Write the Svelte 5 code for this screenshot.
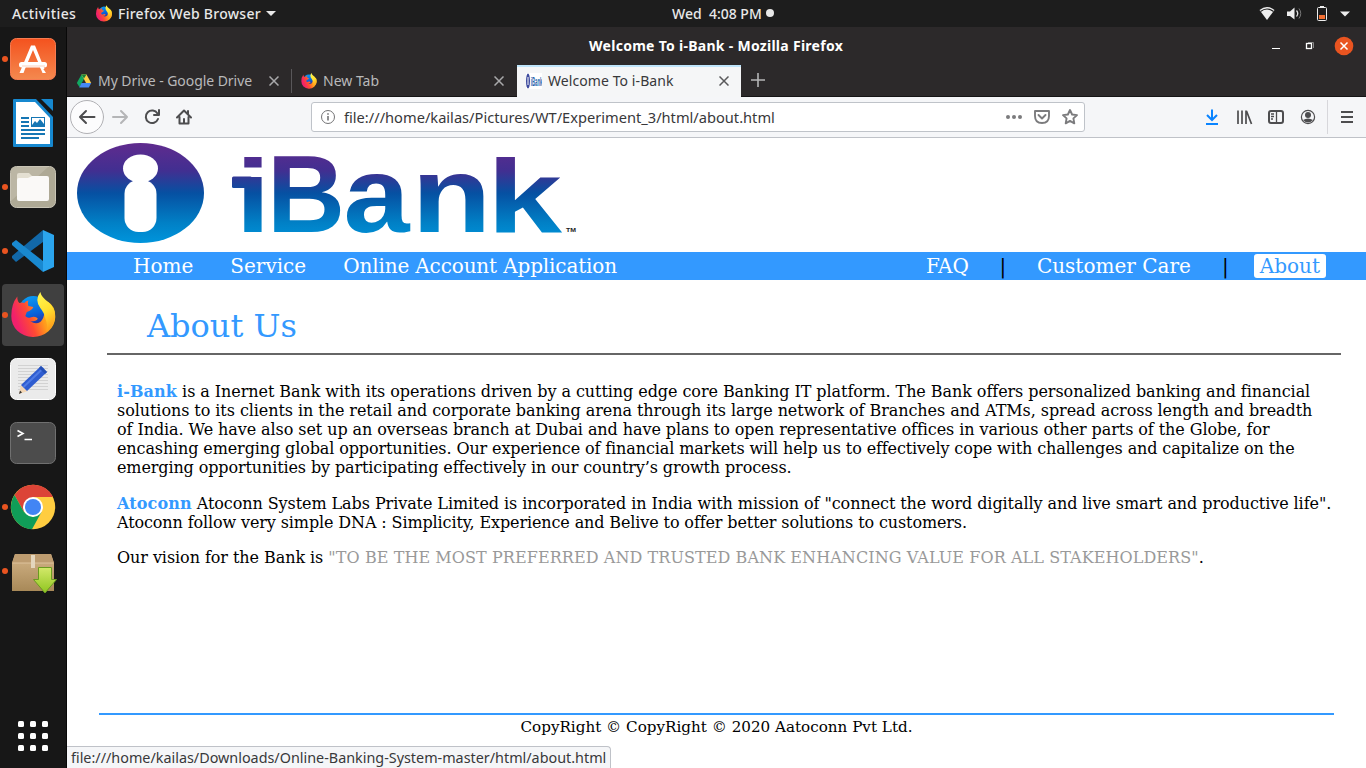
<script>
  const left = ['Home', 'Service', 'Online Account Application'];
  const dots = [0, 1, 2, 3, 4, 5, 6, 7, 8];
</script>

{#snippet firefox()}
  <defs>
    <linearGradient id="ffbody" x1="0.95" y1="0.3" x2="0.1" y2="0.6">
      <stop offset="0" stop-color="#ffc820" /><stop offset="0.35" stop-color="#ff9a1c" /><stop offset="0.65" stop-color="#ff4a34" /><stop offset="1" stop-color="#f0206c" />
    </linearGradient>
    <linearGradient id="fftail" x1="0.3" y1="0" x2="0.6" y2="1">
      <stop offset="0" stop-color="#fff44f" /><stop offset="0.5" stop-color="#ffe02f" /><stop offset="1" stop-color="#ff9a1a" />
    </linearGradient>
    <linearGradient id="ffglobe" x1="0.3" y1="0" x2="0.6" y2="1">
      <stop offset="0" stop-color="#0a9df5" /><stop offset="0.65" stop-color="#0a5fd8" /><stop offset="1" stop-color="#2b2f9b" />
    </linearGradient>
  </defs>
  <circle cx="22" cy="18.500" r="14.500" fill="url(#ffglobe)" />
  <path fill="url(#ffbody)" d="M6 4.500C6 8 6.500 9 8 11Q11 10 13 11Q14 9 17 8.500Q16 11 17 14L22 15Q21 18 15.500 20L14 24Q16 26.500 19 25.500Q24 23.500 26.500 26.500Q25 30 19 29Q24 33 29 30Q33 26 33 20L37 10Q44 14 44 25A22 20.500 0 0 1 0 24Q0 12 6 4.500Z" />
  <path fill="url(#fftail)" d="M29 0Q30 5 37 10Q46 18 43 29Q41 36 35 39Q37 33 33.500 25Q33 21 29 16Q23 8 29 0Z" />
{/snippet}

<div class="desktop">
  <header class="topbar">
    <span class="activities">Activities</span>
    <svg class="ff-small" viewBox="0 0 44 46">{@render firefox()}</svg>
    <span class="appname">Firefox Web Browser</span>
    <svg class="caret" viewBox="0 0 10 5"><path d="M0 0H10L5 5Z" fill="#e8e8e8" /></svg>
    <span class="clock">Wed&nbsp; 4:08 PM</span>
    <i class="dot"></i>
    <svg class="tray" width="98" height="20" viewBox="0 0 98 20" fill="none">
      <path d="M0.500 5Q8 -1 15.500 5L8 15Z" fill="#eee" />
      <path d="M1.500 6.500Q8 1.500 14.500 6.500" stroke="#1d1d1d" stroke-width="1.100" />
      <path d="M28 6.500H31L35.500 2.500V14.500L31 11H28Z" fill="#eee" />
      <path d="M37.500 5.500Q40 8.500 37.500 11.500" stroke="#ddd" stroke-width="1.300" /><path d="M40 3.500Q43.500 8.500 40 13.500" stroke="#777" />
      <rect x="58.500" y="2.500" width="9" height="13" rx="1" stroke="#eee" /><path d="M61 1.500H65" stroke="#eee" /><rect x="60" y="10" width="6" height="4" fill="#f36f32" />
      <path d="M81 6.500H91L86 11.500Z" fill="#eee" />
    </svg>
  </header>

  <div class="main">
    <aside class="dock">
      <div class="app"><i></i>
        <svg viewBox="0 0 66 64">
          <defs><linearGradient id="soft" x2="0" y2="1"><stop stop-color="#f4521e" /><stop offset="1" stop-color="#f4894f" /></linearGradient></defs>
          <rect x="10.500" y="11.500" width="45" height="41" rx="6" fill="url(#soft)" stroke="#f77b50" />
          <path d="M31 18.500H35L44.500 42H41L33 23L25 42L23.500 46H19.500Z" fill="#fff" /><path d="M42 40L46 46H42.500L40 40Z" fill="#fff" />
          <rect x="19" y="35" width="28" height="5.500" rx="2.500" fill="#fff" /><path d="M22 39H45" stroke="#fbd1bd" />
        </svg>
      </div>
      <div class="app">
        <svg viewBox="0 0 66 64">
          <path d="M13 9Q13 8 14 8H36L53 26V55Q53 56 52 56H14Q13 56 13 55Z" fill="#1688cf" /><path d="M16 11H35L50 27V53H16Z" fill="#fff" />
          <path d="M41 8H52Q53 8 53 9V20Z" fill="#1688cf" />
          <path d="M21 27H29M21 31H29M21 35H29M21 39H45M21 43H45M21 47H39" stroke="#1576b4" stroke-width="2" />
          <rect x="31.500" y="26.500" width="13" height="9" fill="none" stroke="#1576b4" /><path d="M32 34L35 30L37 32L40 28L44 33V36H32Z" fill="#1576b4" />
        </svg>
      </div>
      <div class="app"><i></i>
        <svg viewBox="0 0 66 64">
          <rect x="10.500" y="11.500" width="45" height="41" rx="6" fill="#aea995" stroke="#c8c4b5" /><path d="M15 12H48L11 46V16Q11 12 15 12Z" fill="#bbb6a4" />
          <path d="M17 22V20Q17 18 19 18H29L32 21V25H17Z" fill="#e4e0d2" /><path d="M19 23H28L32 21H47Q49 21 49 23V44Q49 46 47 46H19Q17 46 17 44V25Q17 23 19 23Z" fill="#faf9f7" />
        </svg>
      </div>
      <div class="app"><i></i>
        <svg viewBox="0 0 66 64">
          <path d="M12 39L16 43L43 23V11L12 37Z" fill="#1268a8" /><path d="M12 24L16 21L43 42V53L12 26Z" fill="#1989d0" />
          <path d="M43 11L54 16V48L43 53Z" fill="#2ba5ee" />
        </svg>
      </div>
      <div class="app active"><i></i>
        <svg viewBox="0 0 66 64"><g transform="translate(11.300 9)">{@render firefox()}</g></svg>
      </div>
      <div class="app">
        <svg viewBox="0 0 66 64">
          <rect x="10.500" y="11.500" width="45" height="41" rx="6" fill="#ebebeb" stroke="#fff" />
          <path d="M18 18.500H48M18 21.500H48M18 24.500H48M18 27.500H48M18 30.500H48M18 33.500H48M18 36.500H48M18 39.500H48M18 42.500H48" stroke="#d2d2d2" />
          <path d="M19 47L21 38L28 44Z" fill="#f3d6b5" /><path d="M19 47L20 43.500L22 45.500Z" fill="#333" />
          <path d="M21 38L41 19L47 25L27 44Z" fill="#2f5dd0" /><path d="M23.500 40L43.500 21" stroke="#4f7be4" stroke-width="2" /><path d="M41 19L44 22L47 25L45 27L39 21Z" fill="#2450b6" />
        </svg>
      </div>
      <div class="app">
        <svg viewBox="0 0 66 64">
          <rect x="10.500" y="11.500" width="45" height="41" rx="6" fill="#4c4c4c" stroke="#707070" />
          <path d="M17.500 19.500L23 22.500L17.500 25.500M24.500 28.500H32" fill="none" stroke="#fff" stroke-width="1.600" />
        </svg>
      </div>
      <div class="app"><i></i>
        <svg viewBox="0 0 66 64">
          <circle cx="33" cy="32" r="22.200" fill="#ffcd40" />
          <path d="M14.500 20A22.200 22.200 0 0 1 53 22H33L24 37Z" fill="#dc4437" />
          <path d="M14.500 20A22.200 22.200 0 0 0 32 54.200L41.500 37L33 42L24 37Z" fill="#109d58" />
          <circle cx="33" cy="32" r="10" fill="#fff" /><circle cx="33" cy="32" r="8" fill="#4285f4" />
        </svg>
      </div>
      <div class="app"><i></i>
        <svg viewBox="0 0 66 64">
          <defs>
            <linearGradient id="box" x2="0" y2="1"><stop stop-color="#d3b488" /><stop offset="1" stop-color="#a88958" /></linearGradient>
            <linearGradient id="arrow" x2="0" y2="1"><stop stop-color="#d3e96a" /><stop offset="1" stop-color="#8fc51f" /></linearGradient>
          </defs>
          <path d="M15 15H51L54 24V52H12V24Z" fill="url(#box)" /><path d="M15 15H51L54 24H12Z" fill="#bd9c70" /><path d="M12.500 24H53.500" stroke="#dcc29b" />
          <path d="M31 16H35V29H31Z" fill="#e4d6bd" />
          <path d="M38.500 28.500H51.500V40.500H56.500L45 54L33.500 40.500H38.500Z" fill="url(#arrow)" stroke="#6a9b20" />
        </svg>
      </div>
      <div class="grid">{#each dots as d (d)}<b></b>{/each}</div>
    </aside>

    <section class="window">
      <div class="titlebar">
        <span class="title">Welcome To i-Bank - Mozilla Firefox</span>
        <svg width="86" height="20" viewBox="0 0 86 20" fill="none">
          <path d="M3 12.500H11" stroke="#fff" />
          <path d="M39 6.500H44.500V12" stroke="#888" /><rect x="37.500" y="7.500" width="5" height="5" stroke="#fff" stroke-width="1.300" />
          <circle cx="75" cy="10" r="9.300" fill="#e95420" /><path d="M71.500 6.500L78.500 13.500M78.500 6.500L71.500 13.500" stroke="#fff" stroke-width="1.500" />
        </svg>
      </div>

      <div class="tabs">
        <div class="tab">
          <svg class="fav" viewBox="0 0 16 16">
            <path d="M5.500 1.500H10.500L8 6L3.500 14L0.800 10Z" fill="#11a861" /><path d="M5.500 1.500H10.500L15.200 10H10Z" fill="#ffcf48" /><path d="M5.500 1.500H10.500L8 5.500Z" fill="#188038" /><path d="M5.500 10H15.200L12.800 14.500H3.200Z" fill="#4688f4" />
          </svg>
          <span class="t1">My Drive - Google Drive</span>
          <svg class="x" viewBox="0 0 10 10"><path d="M0.500 0.500L9.500 9.500M9.500 0.500L0.500 9.500" /></svg>
        </div>
        <div class="tab second">
          <svg class="fav" viewBox="0 0 44 46">{@render firefox()}</svg>
          <span class="t2">New Tab</span>
          <svg class="x" viewBox="0 0 10 10"><path d="M0.500 0.500L9.500 9.500M9.500 0.500L0.500 9.500" /></svg>
        </div>
        <div class="tab current">
          <svg class="fav" viewBox="0 0 16 16">
            <rect width="16" height="16" fill="#fff" /><ellipse cx="2" cy="8" rx="2" ry="7.500" fill="#3c4a9e" /><path d="M2 4V12" stroke="#fff" />
            <text transform="translate(4.800 13) scale(.33 1)" font-family="Liberation Sans" font-weight="bold" font-size="13" fill="#2868ad">iBank</text>
          </svg>
          <span class="t3">Welcome To i-Bank</span>
          <svg class="x" viewBox="0 0 10 10"><path d="M0.500 0.500L9.500 9.500M9.500 0.500L0.500 9.500" /></svg>
        </div>
        <svg class="plus" viewBox="0 0 14 14"><path d="M7 0V14M0 7H14" stroke="#b5b5b6" stroke-width="1.600" /></svg>
      </div>

      <div class="toolbar">
        <svg width="140" height="40" viewBox="0 0 140 40" fill="none" stroke="#4d4d4f" stroke-width="2" stroke-linecap="round" stroke-linejoin="round">
          <circle cx="20" cy="20" r="16.500" fill="#fcfcfd" stroke="#b1b1b5" stroke-width="1" />
          <path d="M27.500 20H13M19 14L13 20L19 26" />
          <path d="M46 20H60M54 14L60 20L54 26" stroke="#b4b5b7" />
          <path d="M90.500 16.500A6.300 6.300 0 1 0 91 22M92 13V18H87" />
          <path d="M110 20.500L117 13.500L124 20.500M112.500 20V26.500H121.500V20M117 26V22" /><path d="M121 14V17" />
        </svg>
        <div class="url">
          <svg width="16" height="16" viewBox="0 0 16 16" fill="none" stroke="#737375"><circle cx="8" cy="8" r="6.500" /><path d="M8 7V11.500M8 4.200V5.800" stroke-width="1.600" /></svg>
          <span>file:///home/kailas/Pictures/WT/Experiment_3/html/about.html</span>
          <svg class="acts" width="74" height="20" viewBox="0 0 74 20" fill="none" stroke="#7b7b7d" stroke-width="1.900" stroke-linejoin="round" stroke-linecap="round">
            <g fill="#7b7b7d" stroke="none"><circle cx="3" cy="10" r="2" /><circle cx="9" cy="10" r="2" /><circle cx="15" cy="10" r="2" /></g>
            <path d="M30 4H44V9Q44 16 37 16Q30 16 30 9ZM33.500 8L37 11.500L40.500 8" />
            <path d="M65 3L67.100 7.500L72 8.100L68.400 11.400L69.300 16.300L65 13.900L60.700 16.300L61.600 11.400L58 8.100L62.900 7.500Z" />
          </svg>
        </div>
        <svg class="tools" width="160" height="40" viewBox="0 0 160 40" fill="none" stroke="#4d4d4f" stroke-width="2">
          <path d="M6 12.500V23M1 18L6 23L11 18M0 27H12" stroke="#0a84ff" />
          <path d="M32 13.500V27M36 13.500V27M40 13.500V27M40.500 14L45.500 27" stroke-width="1.700" />
          <rect x="63" y="14" width="14" height="12" rx="2" /><path d="M70.500 14V26M65 17H68M65 19.500H68M65 22H67" stroke-width="1.300" />
          <circle cx="102" cy="20" r="6.600" stroke-width="1.200" /><circle cx="102" cy="18" r="3" fill="#4d4d4f" stroke="none" /><path d="M97 23Q102 20 107 23Q102 28 97 23Z" fill="#4d4d4f" stroke="none" />
          <path d="M121.500 3V37" stroke="#d7d7db" stroke-width="1" />
          <path d="M135 15H147M135 20H147M135 25H147" />
        </svg>
      </div>

      <div class="page">
        <svg class="logo" width="500" height="102" viewBox="77 142 500 102">
          <defs><linearGradient id="brand" gradientUnits="userSpaceOnUse" x1="0" y1="143" x2="0" y2="243">
            <stop offset="0" stop-color="#602b8e" /><stop offset="0.280" stop-color="#412f91" /><stop offset="0.500" stop-color="#0650a2" /><stop offset="0.800" stop-color="#0180c6" /><stop offset="1" stop-color="#0095dc" />
          </linearGradient></defs>
          <ellipse cx="140.500" cy="193" rx="63.500" ry="50" fill="url(#brand)" />
          <ellipse cx="140.500" cy="168.500" rx="17.500" ry="14" fill="#fff" />
          <rect x="124.500" y="180" width="32" height="52" rx="14" fill="#fff" />
          <rect x="232" y="176.500" width="20" height="11.500" rx="1.500" fill="url(#brand)" />
          <text y="231.500" font-family="Liberation Sans" font-weight="bold" font-size="107" fill="url(#brand)"><tspan x="235.500" font-size="104" textLength="35" lengthAdjust="spacingAndGlyphs">i</tspan><tspan x="267" font-size="109" textLength="78" lengthAdjust="spacingAndGlyphs">B</tspan><tspan x="343.500" textLength="66" lengthAdjust="spacingAndGlyphs">a</tspan><tspan x="411.500" textLength="80" lengthAdjust="spacingAndGlyphs">n</tspan><tspan x="487" font-size="104" textLength="75" lengthAdjust="spacingAndGlyphs">k</tspan></text>
          <text x="566" y="231.500" font-family="Liberation Sans" font-weight="bold" font-size="5" textLength="10" lengthAdjust="spacingAndGlyphs" fill="#222">TM</text>
        </svg>
        <nav>
          <div class="left">{#each left as item (item)}<a href="#top">{item}</a>{/each}</div>
          <div class="right"><a href="#top">FAQ</a><span>|</span><a href="#top">Customer Care</a><span>|</span><a class="here" href="#top">About</a></div>
        </nav>
        <h1>About Us</h1>
        <article>
          <p><span class="l1"><strong>i-Bank</strong> is a Inernet Bank with its operations driven by a cutting edge core Banking IT platform. The Bank offers personalized banking and financial</span><br /><span class="l2">solutions to its clients in the retail and corporate banking arena through its large network of Branches and ATMs, spread across length and breadth</span><br /><span class="l3">of India. We have also set up an overseas branch at Dubai and have plans to open representative offices in various other parts of the Globe, for</span><br /><span class="l4">encashing emerging global opportunities. Our experience of financial markets will help us to effectively cope with challenges and capitalize on the</span><br /><span class="l4">emerging opportunities by participating effectively in our country’s growth process.</span></p>
          <p><span class="l3"><strong>Atoconn</strong> Atoconn System Labs Private Limited is incorporated in India with mission of "connect the word digitally and live smart and productive life".</span><br /><span class="l4">Atoconn follow very simple DNA : Simplicity, Experience and Belive to offer better solutions to customers.</span></p>
          <p><span class="l1">Our vision for the Bank is</span>{' '}<em>"TO BE THE MOST PREFERRED AND TRUSTED BANK ENHANCING VALUE FOR ALL STAKEHOLDERS"</em>.</p>
        </article>
        <footer>CopyRight © CopyRight © 2020 Aatoconn Pvt Ltd.</footer>
        <div class="status">file:///home/kailas/Downloads/Online-Banking-System-master/html/about.html</div>
      </div>
    </section>
  </div>
</div>

<style>
  :global(body) { margin: 0; overflow: hidden; }
  * { box-sizing: border-box; }
  svg { display: block; flex: none; }
  .desktop { width: 1366px; height: 768px; display: flex; flex-direction: column; background: #171717; font-family: "Noto Sans", sans-serif; font-size: 14px; white-space: nowrap; }
  .topbar { position: relative; height: 27px; flex: none; display: flex; align-items: center; background: #1d1d1d; color: #e8e8e8; padding: 0 9px 0 12px; font-weight: 500; }
  .activities { width: 84px; letter-spacing: 0.4px; }
  .ff-small { width: 16px; height: 17px; margin-right: 6px; }
  .appname { width: 148px; letter-spacing: 0.27px; }
  .caret { width: 10px; height: 5px; }
  .clock { margin-left: 396px; width: 94px; padding-bottom: 1px; }
  .dot { width: 8px; height: 8px; border-radius: 50%; background: #e8e8e8; margin-bottom: 1px; }
  .tray { margin-left: auto; margin-top: 2px; }
  .main { flex: 1; display: flex; min-height: 0; }
  .dock { width: 67px; flex: none; background: #171717; border-right: 1px solid #080808; }
  .app { height: 64px; display: flex; align-items: center; position: relative; }
  .app > svg { width: 66px; height: 64px; position: relative; }
  .app > i { position: absolute; left: 2px; top: 29px; width: 6px; height: 6px; border-radius: 50%; background: #e95420; z-index: 1; }
  .active::before { content: ""; position: absolute; left: 2px; top: 1px; width: 62px; height: 62px; border-radius: 4px; background: #404040; }
  .grid { margin: 118px 0 0 18px; display: grid; grid-template-columns: repeat(3, 6px); gap: 6px; }
  .grid b { height: 6px; border-radius: 1.5px; background: #fff; }
  .window { flex: 1; min-width: 0; display: flex; flex-direction: column; background: #2c292a; }
  .titlebar { height: 38px; display: flex; align-items: center; color: #fff; font-weight: 700; padding: 0 11px 0 522px; }
  .title { flex: 1; font-size: 14px; letter-spacing: 0.28px; padding-bottom: 2px; }
  .tabs { height: 32px; display: flex; border-bottom: 1px solid #151415; color: #b9b9ba; }
  .tab { width: 225px; display: flex; align-items: center; padding: 0 13px 0 9px; position: relative; }
  .tab span { flex: 1; margin-left: 6px; }
  .tab .t1 { letter-spacing: -0.06px; }
  .tab .t3 { letter-spacing: 0.08px; }
  .fav { width: 16px; height: 16px; }
  .second::before { content: ""; width: 1px; height: 24px; background: #59575a; position: absolute; left: -1px; }
  .x { width: 10px; height: 10px; fill: none; stroke: #a9a9ab; stroke-width: 1.5; }
  .current { width: 224px; background: #f5f6f7; color: #38383a; border-top: 2px solid #bfe5fb; height: 32px; padding: 0 12px 3px 9px; }
  .current .x { stroke: #59595b; }
  .plus { width: 14px; height: 14px; margin: 8px 0 0 10px; }
  .toolbar { height: 41px; display: flex; align-items: center; background: #f5f6f8; border-bottom: 1px solid #bfc2c8; }
  .url { margin-left: 104px; width: 774px; height: 30px; border: 1px solid #bfc3c9; border-radius: 3px; background: #fff; display: flex; align-items: center; padding: 0 5px 0 8px; color: #38383a; }
  .url span { margin-left: 8px; flex: 1; font-size: 14.64px; }
  .tools { margin-left: 121px; }
  .page { position: relative; flex: 1; background: #fff; font-family: "DejaVu Serif", serif; font-size: 16px; color: #000; display: flex; flex-direction: column; }
  .logo { margin: 4px 0 0 10px; }
  nav { margin-top: 8px; height: 28px; background: #39f; display: flex; align-items: center; justify-content: space-between; font-size: 20px; line-height: 24px; padding: 0 40px 0 66px; }
  nav a { color: #fff; text-decoration: none; }
  .left { display: flex; gap: 37px; }
  .left a:last-child { letter-spacing: -0.14px; }
  .right { display: flex; }
  .right span { width: 69px; text-align: center; }
  .right span:nth-child(2) { width: 68px; }
  nav .here { background: #fff; color: #39f; border-radius: 3px; padding: 0 6px; margin-left: -6px; }
  h1 { margin: 26px 25px 0 40px; padding: 1px 0 7px 40px; height: 49px; border-bottom: 2px solid #666; font-size: 32px; line-height: 38px; font-weight: 400; color: #39f; }
  article { padding: 27px 0 0 50px; line-height: 19px; }
  p { margin: 0 0 16px; }
  p:first-child { margin-bottom: 17px; }
  .l1 { letter-spacing: -0.066px; }
  .l2 { letter-spacing: -0.068px; }
  .l3 { letter-spacing: -0.077px; }
  .l4 { letter-spacing: -0.118px; }
  strong { color: #39f; letter-spacing: 0.12px; }
  em { color: #999; font-style: normal; letter-spacing: 0.08px; }
  footer { margin: auto 32px 31px; border-top: 2px solid #39f; height: 24px; line-height: 24px; text-align: center; font-size: 15.17px; }
  .status { position: absolute; left: 0; bottom: 0; width: 544px; height: 22px; border: 1px solid #bfc2c8; border-width: 1px 1px 0 0; border-radius: 0 4px 0 0; background: #f5f6f8; color: #38383a; padding-left: 4px; font: 14.37px/21px "Noto Sans", sans-serif; }
</style>
